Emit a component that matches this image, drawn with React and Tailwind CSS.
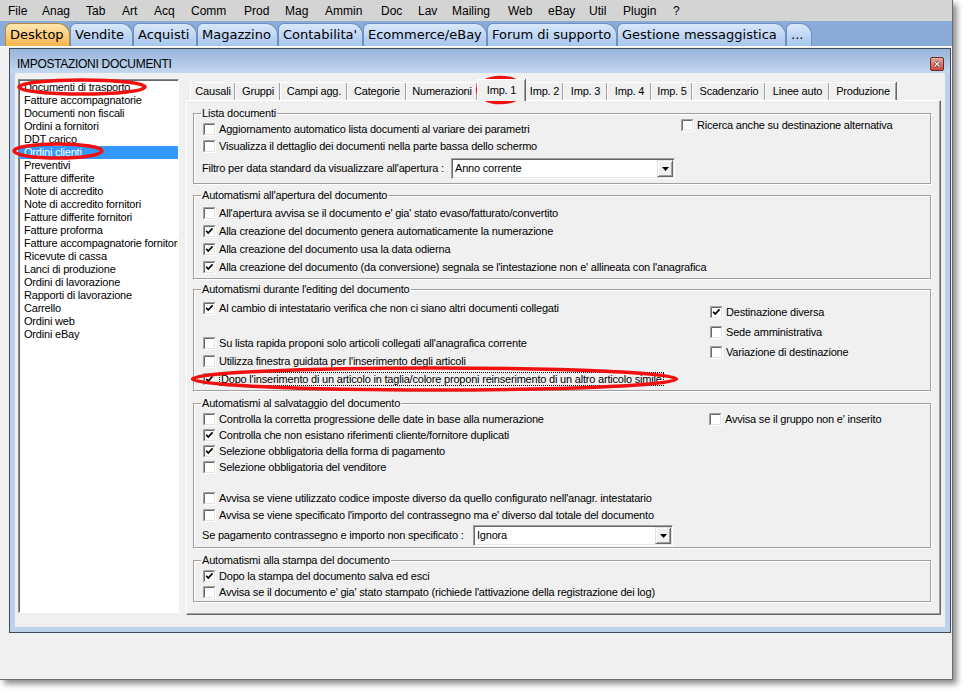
import React from 'react';

const menuItems = [
    { label: 'File', w: 'w-[34px]' },
    { label: 'Anag', w: 'w-[44px]' },
    { label: 'Tab', w: 'w-[36px]' },
    { label: 'Art', w: 'w-[32px]' },
    { label: 'Acq', w: 'w-[37px]' },
    { label: 'Comm', w: 'w-[53px]' },
    { label: 'Prod', w: 'w-[41px]' },
    { label: 'Mag', w: 'w-[40px]' },
    { label: 'Ammin', w: 'w-[56px]' },
    { label: 'Doc', w: 'w-[37px]' },
    { label: 'Lav', w: 'w-[34px]' },
    { label: 'Mailing', w: 'w-[56px]' },
    { label: 'Web', w: 'w-[40px]' },
    { label: 'eBay', w: 'w-[41px]' },
    { label: 'Util', w: 'w-[34px]' },
    { label: 'Plugin', w: 'w-[50px]' },
    { label: '?', w: 'w-[20px]' },
];

const appTabs = [
    { label: 'Desktop', w: 'w-[65px]', active: true },
    { label: 'Vendite', w: 'w-[63px]' },
    { label: 'Acquisti', w: 'w-[64px]' },
    { label: 'Magazzino', w: 'w-[81px]' },
    { label: "Contabilita'", w: 'w-[85px]' },
    { label: 'Ecommerce/eBay', w: 'w-[124px]' },
    { label: 'Forum di supporto', w: 'w-[130px]' },
    { label: 'Gestione messaggistica', w: 'w-[169px]' },
    { label: '...', w: 'w-[26px]' },
];

const docTypes = [
    'Documenti di trasporto',
    'Fatture accompagnatorie',
    'Documenti non fiscali',
    'Ordini a fornitori',
    'DDT carico',
    'Ordini clienti',
    'Preventivi',
    'Fatture differite',
    'Note di accredito',
    'Note di accredito fornitori',
    'Fatture differite fornitori',
    'Fatture proforma',
    'Fatture accompagnatorie fornitori',
    'Ricevute di cassa',
    'Lanci di produzione',
    'Ordini di lavorazione',
    'Rapporti di lavorazione',
    'Carrello',
    'Ordini web',
    'Ordini eBay',
];

const dialogTabs = [
    { label: 'Causali', w: 'w-[45px]' },
    { label: 'Gruppi', w: 'w-[45px]' },
    { label: 'Campi agg.', w: 'w-[67px]' },
    { label: 'Categorie', w: 'w-[59px]' },
    { label: 'Numerazioni', w: 'w-[71px]' },
    { label: 'Imp. 1', w: 'w-[48px]', active: true },
    { label: 'Imp. 2', w: 'w-[38px]' },
    { label: 'Imp. 3', w: 'w-[44px]' },
    { label: 'Imp. 4', w: 'w-[44px]' },
    { label: 'Imp. 5', w: 'w-[41px]' },
    { label: 'Scadenzario', w: 'w-[73px]' },
    { label: 'Linee auto', w: 'w-[64px]' },
    { label: 'Produzione', w: 'w-[67px]' },
];

const CheckBox = ({ checked }) => (
    <svg width="13" height="13" viewBox="0 0 13 13" className="shrink-0">
        <rect x="0" y="0" width="13" height="13" fill="#fff" />
        <path d="M0.5 12.5 V0.5 H12.5" stroke="#a0a0a0" fill="none" />
        <path d="M1.5 11.5 V1.5 H11.5" stroke="#696969" fill="none" />
        <path d="M0.5 12.5 H12.5 V0.5" stroke="#ffffff" fill="none" />
        <path d="M1.5 11.5 H11.5 V1.5" stroke="#e3e3e3" fill="none" />
        {checked && (
            <path d="M3.2 5.8 L5.2 8 L9.6 3.4" stroke="#000" strokeWidth="1.7" fill="none" />
        )}
    </svg>
);

const CheckRow = ({ checked, label, focus, h = 'h-[17px]' }) => (
    <div className={`flex items-center gap-[3px] ${h}`}>
        <CheckBox checked={checked} />
        <span className={focus ? 'border border-dotted border-black leading-[12px] px-[1px] whitespace-nowrap' : 'whitespace-nowrap'}>
            {label}
        </span>
    </div>
);

const Combo = ({ value, w }) => (
    <div className={`${w} h-[21px] bg-white border border-[#a0a0a0] border-b-white border-r-white shadow-[inset_1px_1px_0_#696969,inset_-1px_-1px_0_#e3e3e3] flex items-center pl-[3px]`}>
        <span>{value}</span>
        <div className="ml-auto mr-[1px] w-[16px] h-[17px] bg-[#f0f0f0] border border-[#e3e3e3] border-b-[#696969] border-r-[#696969] shadow-[inset_1px_1px_0_#fff,inset_-1px_-1px_0_#a0a0a0] flex items-center justify-center">
            <svg width="7" height="4" viewBox="0 0 7 4">
                <path d="M0 0 H7 L3.5 4 Z" fill="#000" />
            </svg>
        </div>
    </div>
);

const Group = ({ title, className, children }) => (
    <fieldset className={`border border-[#a0a0a0] shadow-[inset_1px_1px_0_#fff,1px_1px_0_#fff] pl-[9px] pr-[8px] ${className}`}>
        <legend className="-ml-[2px] px-[1px] leading-[13px]">{title}</legend>
        {children}
    </fieldset>
);

const App = () => {
    return (
        <div className="relative w-[968px] h-[694px] bg-white overflow-hidden font-['Liberation_Sans',Arial,sans-serif]">
            <div className="w-[953px] h-[680px] bg-[#f0f0f0] border-r border-b border-[#6a6a6a] shadow-[4px_4px_6px_rgba(0,0,0,0.45)] flex flex-col">
                {/* menu bar */}
                <div className="h-[21px] bg-[#d4d4d4] flex items-center pl-[8px] text-[12px] text-black">
                    {menuItems.map((m) => (
                        <div key={m.label} className={m.w}>{m.label}</div>
                    ))}
                </div>

                {/* application tabs */}
                <div className="h-[25px] bg-[#8aabd8] flex items-end pl-[5px] font-['DejaVu_Sans',Verdana,sans-serif] text-[13px] text-black">
                    {appTabs.map((t) => (
                        <div
                            key={t.label}
                            className={`${t.w} h-[23px] flex items-center pl-[4px] whitespace-nowrap border border-b-0 rounded-tl-[6px] rounded-tr-[12px] ${t.active
                                ? 'bg-gradient-to-b from-[#ffe7ae] to-[#f7b44a] border-[#b58a3e]'
                                : 'bg-gradient-to-b from-[#d9e8f9] to-[#a8c6ee] border-[#6f8fbd]'
                                }`}
                        >
                            {t.label}
                        </div>
                    ))}
                </div>
                <div className="h-px bg-white" />

                {/* document window */}
                <div className="ml-[9px] mt-[1px] w-[942px] h-[585px] border border-[#3e4c5e] bg-[#bcd2ec] flex flex-col text-[11px] tracking-[-0.2px] text-black">
                    <div className="h-[24px] bg-gradient-to-b from-[#97b4db] to-[#c4d7ef] flex items-end pb-[2px] pl-[7px] pr-[6px]">
                        <span className="text-[12px] tracking-[-0.3px] leading-[14px]">IMPOSTAZIONI DOCUMENTI</span>
                        <svg width="14" height="14" viewBox="0 0 14 14" className="ml-auto">
                            <defs>
                                <linearGradient id="cls" x1="0" y1="0" x2="0" y2="1">
                                    <stop offset="0" stopColor="#eab0a8" />
                                    <stop offset="1" stopColor="#c4473d" />
                                </linearGradient>
                            </defs>
                            <rect x="0.5" y="0.5" width="13" height="13" rx="1.5" fill="url(#cls)" stroke="#6e2b26" />
                            <path d="M4.5 4.5 L9.5 9.5 M9.5 4.5 L4.5 9.5" stroke="#5a1a16" strokeWidth="2.6" />
                            <path d="M4.5 4.5 L9.5 9.5 M9.5 4.5 L4.5 9.5" stroke="#fff" strokeWidth="1.4" />
                        </svg>
                    </div>

                    <div className="mx-[5px] mb-[5px] flex-1 bg-[#f0f0f0] flex pl-[3px] pt-[6px] gap-[7px]">
                        {/* list of document types */}
                        <div className="w-[161px] h-[534px] bg-white border border-[#8a8a8a] border-b-white border-r-white shadow-[inset_1px_1px_0_#696969] pt-[1px]">
                            {docTypes.map((d) => (
                                <div
                                    key={d}
                                    className={`h-[13px] leading-[13px] pl-[5px] whitespace-nowrap overflow-hidden ${d === 'Ordini clienti' ? 'bg-[#3399ff] text-white' : ''}`}
                                >
                                    {d}
                                </div>
                            ))}
                        </div>

                        {/* tab control */}
                        <div className="w-[755px] flex flex-col">
                            <div className="h-[21px] flex items-end pl-[4px]">
                                {dialogTabs.map((t) => (
                                    <div
                                        key={t.label}
                                        className={`${t.w} flex items-center justify-center bg-[#f0f0f0] border-t border-l border-white shadow-[inset_-1px_0_0_#a0a0a0,1px_0_0_#696969] ${t.active ? 'h-[22px] -mb-px relative z-10' : 'h-[18px]'
                                            }`}
                                    >
                                        {t.label}
                                    </div>
                                ))}
                            </div>
                            <div className="h-[515px] border-t border-l border-white border-r border-b border-r-[#696969] border-b-[#696969] shadow-[inset_-1px_-1px_0_#a0a0a0] pt-[6px] pl-[6px]">
                                <div className="w-[738px] flex flex-col">
                                    <Group title="Lista documenti" className="pb-[4px]">
                                        <div className="flex mt-[1px]">
                                            <div className="w-[478px]">
                                                <CheckRow label="Aggiornamento automatico lista documenti al variare dei parametri" />
                                                <CheckRow label="Visualizza il dettaglio dei documenti nella parte bassa dello schermo" />
                                            </div>
                                            <div className="mt-[-4px]">
                                                <CheckRow label="Ricerca anche su destinazione alternativa" />
                                            </div>
                                        </div>
                                        <div className="flex items-center mt-[3px] -ml-px">
                                            <span className="w-[249px] whitespace-nowrap">Filtro per data standard da visualizzare all'apertura :</span>
                                            <Combo value="Anno corrente" w="w-[224px]" />
                                        </div>
                                    </Group>

                                    <Group title="Automatismi all'apertura del documento" className="mt-[5px] pb-[2px]">
                                        <div className="mt-[2px]">
                                            <CheckRow h="h-[18px]" label="All'apertura avvisa se il documento e' gia' stato evaso/fatturato/convertito" />
                                            <CheckRow h="h-[18px]" checked label="Alla creazione del documento genera automaticamente la numerazione" />
                                            <CheckRow h="h-[18px]" checked label="Alla creazione del documento usa la data odierna" />
                                            <CheckRow h="h-[18px]" checked label="Alla creazione del documento (da conversione) segnala se l'intestazione non e' allineata con l'anagrafica" />
                                        </div>
                                    </Group>

                                    <Group title="Automatismi durante l'editing del documento" className="mt-[4px] pb-[2px]">
                                        <div className="flex">
                                            <div className="w-[507px] pt-[3px]">
                                                <CheckRow h="h-[18px]" checked label="Al cambio di intestatario verifica che non ci siano altri documenti collegati" />
                                                <div className="h-[17px]" />
                                                <CheckRow h="h-[18px]" label="Su lista rapida proponi solo articoli collegati all'anagrafica corrente" />
                                                <CheckRow h="h-[18px]" label="Utilizza finestra guidata per l'inserimento degli articoli" />
                                            </div>
                                            <div className="pt-[8px] flex flex-col gap-[4px]">
                                                <CheckRow h="h-[16px]" checked label="Destinazione diversa" />
                                                <CheckRow h="h-[16px]" label="Sede amministrativa" />
                                                <CheckRow h="h-[16px]" label="Variazione di destinazione" />
                                            </div>
                                        </div>
                                        <CheckRow h="h-[18px]" checked focus label="Dopo l'inserimento di un articolo in taglia/colore proponi reinserimento di un altro articolo simile" />
                                    </Group>

                                    <Group title="Automatismi al salvataggio del documento" className="mt-[6px] pb-[1px]">
                                        <div className="flex mt-[1px]">
                                            <div className="w-[506px]">
                                                <CheckRow h="h-[16px]" label="Controlla la corretta progressione delle date in base alla numerazione" />
                                                <CheckRow h="h-[16px]" checked label="Controlla che non esistano riferimenti cliente/fornitore duplicati" />
                                                <CheckRow h="h-[16px]" checked label="Selezione obbligatoria della forma di pagamento" />
                                                <CheckRow h="h-[16px]" label="Selezione obbligatoria del venditore" />
                                            </div>
                                            <CheckRow h="h-[16px]" label="Avvisa se il gruppo non e' inserito" />
                                        </div>
                                        <div className="mt-[15px]">
                                            <CheckRow label="Avvisa se viene utilizzato codice imposte diverso da quello configurato nell'anagr. intestatario" />
                                            <CheckRow label="Avvisa se viene specificato l'importo del contrassegno ma e' diverso dal totale del documento" />
                                        </div>
                                        <div className="flex items-center mt-[1px] -ml-px">
                                            <span className="w-[271px] whitespace-nowrap">Se pagamento contrassegno e importo non specificato :</span>
                                            <Combo value="Ignora" w="w-[200px]" />
                                        </div>
                                    </Group>

                                    <Group title="Automatismi alla stampa del documento" className="mt-[6px] pb-[1px]">
                                        <div className="mt-[1px]">
                                            <CheckRow h="h-[16px]" checked label="Dopo la stampa del documento salva ed esci" />
                                            <CheckRow h="h-[16px]" label="Avvisa se il documento e' gia' stato stampato (richiede l'attivazione della registrazione dei log)" />
                                        </div>
                                    </Group>
                                </div>
                            </div>
                        </div>
                    </div>
                </div>
            </div>

            {/* red annotation marks drawn over the screenshot */}
            <svg className="absolute inset-0 pointer-events-none" width="968" height="694" viewBox="0 0 968 694">
                <g fill="none" stroke="#f01010" strokeWidth="3.5">
                    <ellipse cx="82" cy="87" rx="63" ry="7" />
                    <ellipse cx="58" cy="151" rx="44" ry="7" />
                    <ellipse cx="500.5" cy="90" rx="23" ry="12.5" />
                    <ellipse cx="434.5" cy="379" rx="242" ry="11" />
                </g>
            </svg>
        </div>
    );
};

export default App;
